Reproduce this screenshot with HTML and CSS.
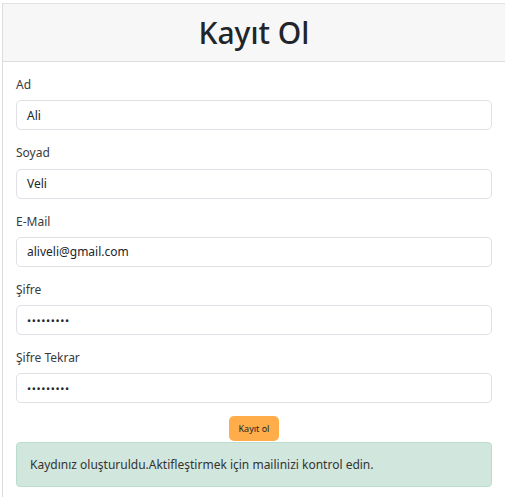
FILE: index.html
```html
<!DOCTYPE html>
<html lang="tr">
<head>
<meta charset="utf-8">
<title>Kayıt Ol</title>
<link rel="stylesheet" href="styles.css">
</head>
<body>
<div class="card">
  <div class="card-header"><h1 class="title">Kayıt Ol</h1></div>
  <div class="card-body">
    <div class="group">
      <label class="label">Ad</label>
      <div class="input">Ali</div>
    </div>
    <div class="group">
      <label class="label">Soyad</label>
      <div class="input">Veli</div>
    </div>
    <div class="group">
      <label class="label">E-Mail</label>
      <div class="input">aliveli@gmail.com</div>
    </div>
    <div class="group">
      <label class="label">Şifre</label>
      <div class="input pw">•••••••••</div>
    </div>
    <div class="group">
      <label class="label">Şifre Tekrar</label>
      <div class="input pw">•••••••••</div>
    </div>
    <div class="actions"><button class="btn">Kayıt ol</button></div>
    <div class="alert">Kaydınız oluşturuldu.Aktifleştirmek için mailinizi kontrol edin.</div>
  </div>
</div>
</body>
</html>
```
FILE: styles.css
```css
html, body { margin: 0; padding: 0; background: #fff; }
body {
  font-family: "Noto Sans", "Open Sans", sans-serif;
  color: #212529;
  padding: 3px 0 0 2px;
}
.card {
  width: 503px;
  border-left: 1px solid #dcdcdc;
  border-top: 1px solid #e2e2e2;
  min-height: 494px;
  box-sizing: border-box;
}
.card-header {
  height: 57px;
  background: #f7f7f7;
  border-bottom: 1px solid #dcdcdc;
  display: flex;
  align-items: center;
  justify-content: center;
}
.title {
  margin: 0;
  font-size: 30px;
  font-weight: 500;
  line-height: 1;
  color: #212529;
}
.card-body {
  padding: 13px 13px 0 13px;
}
.group {
  display: flex;
  flex-direction: column;
  margin-bottom: 13px;
}
.label {
  font-size: 12px;
  line-height: 19px;
  height: 19.25px;
  margin-bottom: 6px;
  color: #3a3a3a;
}
.input {
  height: 30px;
  box-sizing: border-box;
  border: 1px solid #dee2e6;
  border-radius: 5px;
  padding: 0 10px;
  display: flex;
  align-items: center;
  font-size: 12px;
  color: #212529;
}
.input.pw { font-size: 11px; letter-spacing: 0.6px; }
.actions {
  display: flex;
  justify-content: center;
}
.btn {
  height: 25px;
  padding: 0 10px;
  border: none;
  border-radius: 5px;
  background: #ffad4b;
  font-family: inherit;
  font-size: 9px;
  color: #212529;
}
.alert {
  height: 45px;
  margin-top: 1px;
  box-sizing: border-box;
  background: #d1e7dd;
  border: 1px solid #bcdccd;
  border-radius: 4px;
  padding: 0 13px;
  display: flex;
  align-items: center;
  font-size: 12px;
  color: #333;
}
```
